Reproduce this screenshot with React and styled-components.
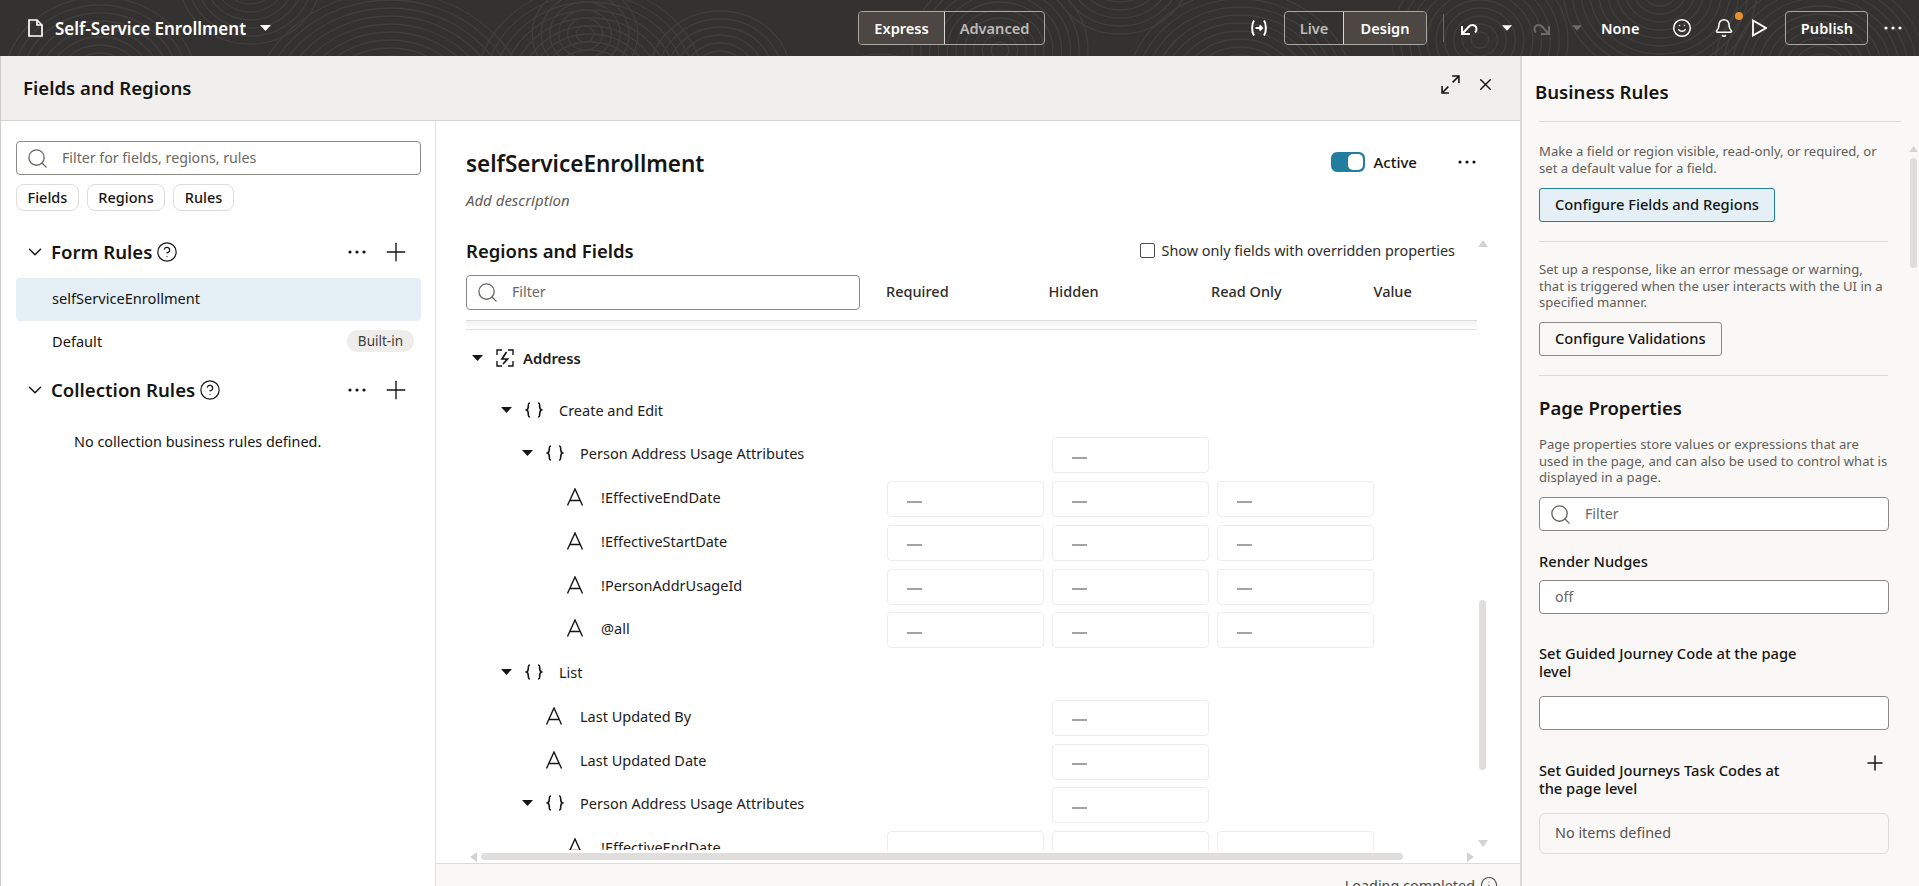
import React from "react";
import styled, { createGlobalStyle } from "styled-components";
import { ChevronDown, CircleHelp, Plus, X, Search, Bell, Smile, Info } from "lucide-react";

const Global = createGlobalStyle`
  * { box-sizing: border-box; }
  html, body { margin: 0; height: 100%; background: #fff; overflow: hidden; }
  body { font-family: "Noto Sans", "Open Sans", Arial, sans-serif; color: #161513; font-size: 14px; }
`;

const Page = styled.div`display:flex;flex-direction:column;height:886px;width:1919px;overflow:hidden;`;

/* ---------- top bar ---------- */
const TopBar = styled.header`
  position: relative; height: 56px; flex: none; background: #333231; color: #fff;
  display: flex; align-items: center; overflow: hidden;
`;
const Texture = styled.svg`position:absolute;inset:0;width:100%;height:100%;`;
const BarLayer = styled.div`position:relative;display:flex;align-items:center;width:100%;height:100%;padding-left:28px;`;
const PageTitle = styled.span`font-size:17px;font-weight:600;margin-left:12px;white-space:nowrap;`;
const Tabs = styled.div`display:flex;height:34px;border:1px solid #a9a7a4;border-radius:4px;overflow:hidden;margin-left:${p => p.$ml}px;`;
const Tab = styled.div`
  width:${p => p.$w}px;display:flex;align-items:center;justify-content:center;font-size:14.6px;font-weight:600;padding-bottom:1px;
  color:${p => (p.$on ? "#fff" : "#bdbbb8")};background:${p => (p.$on ? "#4d4743" : "transparent")};
  & + & { border-left:1px solid #d8d6d3; }
`;
const VSep = styled.div`width:1px;height:28px;background:#6c6a68;margin:0 16px;`;
const BarText = styled.span`font-size:14.6px;font-weight:600;margin-left:${p => p.$ml}px;`;
const BarIcon = styled.span`display:flex;position:relative;margin-left:${p => p.$ml || 0}px;color:${p => p.$c || "#fff"};`;
const Dot = styled.span`position:absolute;width:8px;height:8px;border-radius:50%;background:#e8912f;top:-6px;right:-9px;`;
const PublishBtn = styled.div`
  height:34px;width:83px;border:1px solid #a9a7a4;border-radius:4px;margin-left:18px;display:flex;align-items:center;justify-content:center;
  font-size:14.6px;font-weight:600;padding-bottom:1px;
`;

/* ---------- layout ---------- */
const Body = styled.div`flex:1;display:flex;min-height:0;`;
const Main = styled.main`flex:1;display:flex;flex-direction:column;min-width:0;border-left:1px solid #cfcdca;`;
const PanelHead = styled.div`
  height:65px;flex:none;background:#f1efed;border-bottom:1px solid #d6d4d1;display:flex;align-items:center;
  padding:0 25px 2px 22px;
`;
const PanelTitle = styled.h2`margin:0;font-size:18.6px;font-weight:600;flex:1;`;
const PanelTools = styled.div`display:flex;align-items:center;margin-bottom:5px;`;
const Columns = styled.div`flex:1;display:flex;min-height:0;`;

/* ---------- left column ---------- */
const Left = styled.aside`width:435px;flex:none;padding:20px 14px 0 15px;border-right:1px solid #e3e1df;`;
const SearchBox = styled.div`
  height:${p => p.$h || 34}px;border:1px solid #8c8a87;border-radius:4px;background:#fff;display:flex;align-items:center;
  padding:0 0 2px 9px;color:#6b6864;font-size:14.2px;gap:13px;width:${p => (p.$w ? p.$w + "px" : "auto")};flex:none;
  margin-top:${p => p.$mt || 0}px;
  & > svg { margin-top:2px; }
`;
const Chips = styled.div`display:flex;gap:8px;margin-top:9px;`;
const Chip = styled.div`height:27px;padding:0 10.5px 1px;border:1px solid #dedcda;border-radius:8px;display:flex;align-items:center;font-size:14.5px;font-weight:500;`;
const SectionHead = styled.div`height:32px;display:flex;align-items:center;padding:0 10px 0 8px;margin-top:${p => p.$mt}px;`;
const SectionName = styled.span`font-size:18.6px;font-weight:600;margin:0 4px 2px 5px;white-space:nowrap;`;
const Spacer = styled.div`flex:1;`;
const RuleRow = styled.div`
  height:43px;display:flex;align-items:center;justify-content:space-between;padding:0 7px 3px 36px;font-size:14.6px;border-radius:4px;
  background:${p => (p.$on ? "#e4f0f6" : "transparent")};margin-top:${p => p.$mt || 0}px;
`;
const Pill = styled.span`height:22px;padding:0 11px;border-radius:11px;background:#efedeb;display:flex;align-items:center;font-size:13.5px;color:#3f3d3a;`;
const EmptyNote = styled.p`margin:26px 0 0 58px;font-size:14.4px;line-height:20px;`;

/* ---------- center ---------- */
const Center = styled.section`position:relative;flex:1;display:flex;flex-direction:column;min-width:0;padding-top:26px;`;
const Inset = styled.div`padding:0 44px 0 30px;`;
const TitleRow = styled(Inset)`display:flex;align-items:center;height:32px;`;
const RuleTitle = styled.h1`margin:0;font-size:22.5px;font-weight:600;flex:1;`;
const Switch = styled.div`width:34px;height:20px;border-radius:6px;background:#227e9e;border:2px solid #227e9e;display:flex;justify-content:flex-end;margin-bottom:2px;`;
const Knob = styled.div`width:15px;height:16px;background:#fff;border-radius:5px;`;
const ActiveText = styled.span`font-size:15px;font-weight:500;margin:0 41px 3px 8px;`;
const DotsWrap = styled.span`display:flex;margin-bottom:2px;`;
const Desc = styled(Inset)`margin-top:11px;height:20px;line-height:20px;font-style:italic;color:#5f5c58;font-size:15px;`;
const RegionHead = styled(Inset)`display:flex;align-items:center;height:24px;margin-top:28px;padding-right:65px;`;
const SubTitle = styled.h3`margin:0;font-size:18.5px;font-weight:600;flex:1;`;
const Box = styled.span`width:15px;height:15px;border:1px solid #4f4d4a;border-radius:2px;margin-right:7px;margin-top:1px;`;
const CheckText = styled.span`font-size:14.4px;color:#2e2c2a;`;
const FilterRow = styled(Inset)`display:flex;align-items:center;margin-top:13px;height:35px;`;
const HeadCols = styled.div`display:flex;margin-left:26px;padding-bottom:4px;`;
const HeadCol = styled.div`width:162.5px;font-size:14.5px;font-weight:500;color:#2e2c2a;`;
const Fade = styled.div`
  margin:10px 43px 0 30px;height:10px;flex:none;border-top:1px solid #dedcda;border-bottom:1px solid #e4e2e0;
  background:linear-gradient(#f3f2f1,#fff);
`;
const Tree = styled.div`flex:1;min-height:0;overflow:hidden;margin:0 43px 13px 30px;`;
const Row = styled.div`display:flex;align-items:center;height:${p => p.$h || 43.75}px;flex:none;`;
const NameCell = styled.div`width:421px;flex:none;display:flex;align-items:center;padding-left:${p => p.$pl}px;padding-bottom:4px;`;
const Label = styled.span`font-size:${p => (p.$strong ? 14.8 : 14.5)}px;font-weight:${p => (p.$strong ? 600 : 400)};margin-left:${p => p.$ml}px;white-space:nowrap;color:#1e1c1a;`;
const Cells = styled.div`display:grid;grid-template-columns:repeat(3,157px);column-gap:8px;`;
const Cell = styled.div`
  grid-column:${p => p.$col};height:36px;border:1px solid #efedeb;border-radius:4px;display:flex;align-items:center;padding:5px 0 0 19px;
`;
const Dash = styled.span`width:15px;height:2px;background:#a5a3a0;`;
const CaretGap = styled.span`width:13px;flex:none;`;
const Footer = styled.div`
  height:23px;flex:none;background:#f9f8f6;border-top:1px solid #dedcda;display:flex;justify-content:flex-end;align-items:flex-start;
  padding:12px 22px 0 0;gap:5px;font-size:14.4px;color:#4c4a47;white-space:nowrap;overflow:hidden;
`;
const Track = styled.div`position:absolute;background:#dfdedc;border-radius:4px;left:${p => p.$l}px;top:${p => p.$t}px;width:${p => p.$w}px;height:${p => p.$h}px;`;
const Arrow = styled.svg`position:absolute;left:${p => p.$l}px;top:${p => p.$t}px;fill:#d4d3d1;`;

/* ---------- right panel ---------- */
const Right = styled.aside`
  position:relative;width:399px;flex:none;background:#f9f8f6;border-left:2px solid #dbd9d7;padding:24px 18px 0 17px;overflow:hidden;
`;
const RightTitle = styled.h2`margin:0 0 0 -4px;font-size:18.6px;line-height:24px;font-weight:600;`;
const Line = styled.div`height:1px;background:#dcdad8;margin:${p => p.$m}px ${p => (p.$wide ? 0 : 13)}px 0 0;`;
const Help = styled.p`margin:${p => p.$mt}px 0 0;font-size:13.1px;line-height:${p => p.$lh || 16.5}px;color:#615e5a;width:350px;`;
const OutlineBtn = styled.div`
  display:inline-flex;align-items:center;height:34px;padding:0 15px 3px;margin-top:11.5px;border-radius:3px;font-size:14.7px;font-weight:500;
  background:${p => (p.$on ? "#e4f0f6" : "transparent")};border:1px solid ${p => (p.$on ? "#227e9e" : "#8c8a87")};
`;
const Block = styled.div`width:350px;`;
const BigTitle = styled.h2`margin:19px 0 0;font-size:18.5px;line-height:26px;font-weight:600;`;
const FieldLabel = styled.div`font-size:14.7px;line-height:18px;font-weight:500;margin-top:${p => p.$mt}px;max-width:${p => p.$mw || 349}px;`;
const Input = styled.div`
  height:34px;border:1px solid #8c8a87;border-radius:4px;background:#fff;display:flex;align-items:center;padding:0 0 2px 15px;
  margin-top:${p => p.$mt}px;color:#6b6864;font-size:14.2px;
`;
const LabelRow = styled.div`display:flex;justify-content:space-between;align-items:flex-start;`;
const NoItems = styled.div`height:41px;margin-top:16px;border:1px solid #dedcda;border-radius:6px;display:flex;align-items:center;padding:0 0 2px 15px;font-size:14.4px;color:#55524f;`;

/* ---------- drawings ---------- */
const rings = [
  [100, 85, 90], [390, 120, 130], [590, 90, 110], [585, 34, 50], [720, 75, 70], [1000, 50, 80], [1240, 95, 110],
  [1480, 40, 80], [1660, -10, 95], [1820, 70, 100], [880, 110, 60], [250, -20, 70], [1120, -30, 70],
];
const TopTexture = () => (
  <Texture aria-hidden="true">
    {rings.map(([cx, cy, r], i) => (
      <g key={i} fill="none" stroke="#403f3d" strokeWidth="1.3">
        {Array.from({ length: Math.floor(r / 8) }, (_, k) => (
          <ellipse key={k} cx={cx} cy={cy} rx={(k + 1) * 8 * 1.1} ry={(k + 1) * 8} />
        ))}
      </g>
    ))}
  </Texture>
);
const Caret = ({ c = "#161513", w = 11 }) => (
  <svg width={w} height="6" viewBox="0 0 11 6" style={{ flex: "none" }}><path d="M0 0h11L5.500 6z" fill={c} /></svg>
);
const Dots = ({ c = "#161513" }) => (
  <svg width="18" height="4" viewBox="0 0 18 4" style={{ flex: "none" }}>
    <circle cx="2" cy="2" r="1.6" fill={c} /><circle cx="9" cy="2" r="1.6" fill={c} /><circle cx="16" cy="2" r="1.6" fill={c} />
  </svg>
);
const DocIcon = () => (
  <svg width="15" height="18" viewBox="0 0 15 18" fill="none" stroke="#fff" strokeWidth="1.7"><path d="M1 1h8l5 5v11H1z" /><path d="M9 1v5h5" /></svg>
);
const BracketArrow = () => (
  <svg width="18" height="18" viewBox="0 0 18 18" fill="none" stroke="#fff" strokeWidth="2">
    <path d="M4 1.500C1.500 5 1.500 13 4 16.500M14 1.500c2.500 3.500 2.500 11.500 0 15" /><path d="M5.500 9h6.500M9.500 6.500 12 9l-2.500 2.500" />
  </svg>
);
const Undo = ({ c = "#fff", flip }) => (
  <svg width="18" height="16" viewBox="0 0 18 16" fill="none" stroke={c} strokeWidth="2" style={flip ? { transform: "scaleX(-1)" } : undefined}>
    <path d="M2 6v8h8" /><path d="M2.500 13.500 9 6.500c2.500-2.600 7-1.500 7.500 2 .2 1.500-.3 2.800-1.500 4" />
  </svg>
);
const PlayIcon = () => (
  <svg width="15" height="18" viewBox="0 0 15 18" fill="none" stroke="#fff" strokeWidth="1.8"><path d="M1 1.500v15L14 9z" /></svg>
);
const ExpandIcon = () => (
  <svg width="19" height="19" viewBox="0 0 18 18" fill="none" stroke="#161513" strokeWidth="1.5">
    <path d="M10.500 1h6.500v6.500M17 1l-6 6M7.500 17H1v-6.500M1 17l6-6" />
  </svg>
);
const AddressIcon = () => (
  <svg width="18" height="18" viewBox="0 0 18 18" fill="none" stroke="#161513" strokeWidth="1.4">
    <path d="M1 6V1h5M12 1h5v5M17 12v5h-5M6 17H1v-5" />
    <path d="M10.500 3 6 10h5.500L7 15" strokeWidth="1.7" />
  </svg>
);
const Braces = () => (
  <svg width="18" height="16" viewBox="0 0 17 16" fill="none" stroke="#161513" strokeWidth="1.6" style={{ flex: "none" }}>
    <path d="M4.500 1C2.800 1 2.800 2 2.800 4c0 2.500-.3 3.500-1.800 4 1.500.5 1.800 1.500 1.800 4 0 2 0 3 1.700 3" />
    <path d="M12.500 1c1.700 0 1.700 1 1.700 3 0 2.500.3 3.500 1.800 4-1.500.5-1.800 1.500-1.800 4 0 2 0 3-1.700 3" />
  </svg>
);
const AIcon = () => (
  <svg width="18" height="18" viewBox="0 0 17 18" fill="none" stroke="#161513" strokeWidth="1.4" style={{ flex: "none" }}>
    <path d="M1 17.500 8.500 1l7.500 16.500M3.500 12.500h10" />
  </svg>
);

const rows = [
  { kind: "region", pl: 6, name: "Address", h: 59.75 },
  { kind: "brace", pl: 35, name: "Create and Edit" },
  { kind: "brace", pl: 56, name: "Person Address Usage Attributes", cells: [2] },
  { kind: "a", pl: 100, name: "!EffectiveEndDate", cells: [1, 2, 3] },
  { kind: "a", pl: 100, name: "!EffectiveStartDate", cells: [1, 2, 3] },
  { kind: "a", pl: 100, name: "!PersonAddrUsageId", cells: [1, 2, 3] },
  { kind: "a", pl: 100, name: "@all", cells: [1, 2, 3] },
  { kind: "brace", pl: 35, name: "List" },
  { kind: "a", pl: 79, name: "Last Updated By", cells: [2] },
  { kind: "a", pl: 79, name: "Last Updated Date", cells: [2] },
  { kind: "brace", pl: 56, name: "Person Address Usage Attributes", cells: [2] },
  { kind: "a", pl: 100, name: "!EffectiveEndDate", cells: [1, 2, 3] },
];

const TreeRow = ({ r }) => (
  <Row $h={r.h}>
    <NameCell $pl={r.pl}>
      {r.kind === "region" && (<><Caret /><CaretGap /><AddressIcon /><Label $strong $ml={9}>{r.name}</Label></>)}
      {r.kind === "brace" && (<><Caret /><CaretGap /><Braces /><Label $ml={16}>{r.name}</Label></>)}
      {r.kind === "a" && (<><AIcon /><Label $ml={17}>{r.name}</Label></>)}
    </NameCell>
    {r.cells && (
      <Cells>
        {r.cells.map(c => <Cell key={c} $col={c}><Dash /></Cell>)}
      </Cells>
    )}
  </Row>
);

const SectionRow = ({ mt, name }) => (
  <SectionHead $mt={mt}>
    <ChevronDown size={22} strokeWidth={1.6} />
    <SectionName>{name}</SectionName>
    <CircleHelp size={22} strokeWidth={1.3} />
    <Spacer />
    <Dots />
    <BarIcon $ml={15} $c="#161513"><Plus size={30} strokeWidth={1.1} /></BarIcon>
  </SectionHead>
);

export default function App() {
  return (
    <Page>
      <Global />
      <TopBar>
        <TopTexture />
        <BarLayer>
          <DocIcon />
          <PageTitle>Self-Service Enrollment</PageTitle>
          <BarIcon $ml={14}><Caret c="#fff" /></BarIcon>
          <Tabs $ml={587}>
            <Tab $on $w={85}>Express</Tab>
            <Tab $w={100}>Advanced</Tab>
          </Tabs>
          <BarIcon $ml={205}><BracketArrow /></BarIcon>
          <Tabs $ml={16}>
            <Tab $w={58}>Live</Tab>
            <Tab $on $w={83}>Design</Tab>
          </Tabs>
          <VSep />
          <Undo />
          <BarIcon $ml={24}><Caret c="#fff" w={10} /></BarIcon>
          <BarIcon $ml={21}><Undo c="#6d6b69" flip /></BarIcon>
          <BarIcon $ml={21}><Caret c="#6d6b69" w={10} /></BarIcon>
          <BarText $ml={19}>None</BarText>
          <BarIcon $ml={33}><Smile size={20} strokeWidth={1.8} /></BarIcon>
          <BarIcon $ml={22}><Bell size={20} strokeWidth={1.8} /><Dot /></BarIcon>
          <BarIcon $ml={18}><PlayIcon /></BarIcon>
          <PublishBtn>Publish</PublishBtn>
          <BarIcon $ml={16}><Dots c="#fff" /></BarIcon>
        </BarLayer>
      </TopBar>
      <Body>
        <Main>
          <PanelHead>
            <PanelTitle>Fields and Regions</PanelTitle>
            <PanelTools>
              <ExpandIcon />
              <BarIcon $ml={16} $c="#161513"><X size={19} strokeWidth={1.7} /></BarIcon>
            </PanelTools>
          </PanelHead>
          <Columns>
            <Left>
              <SearchBox><Search size={23} strokeWidth={1.4} />Filter for fields, regions, rules</SearchBox>
              <Chips><Chip>Fields</Chip><Chip>Regions</Chip><Chip>Rules</Chip></Chips>
              <SectionRow mt={25} name="Form Rules" />
              <RuleRow $on $mt={10}>selfServiceEnrollment</RuleRow>
              <RuleRow>Default<Pill>Built-in</Pill></RuleRow>
              <SectionRow mt={10} name="Collection Rules" />
              <EmptyNote>No collection business rules defined.</EmptyNote>
            </Left>
            <Center>
              <TitleRow>
                <RuleTitle>selfServiceEnrollment</RuleTitle>
                <Switch><Knob /></Switch>
                <ActiveText>Active</ActiveText>
                <DotsWrap><Dots /></DotsWrap>
              </TitleRow>
              <Desc>Add description</Desc>
              <RegionHead>
                <SubTitle>Regions and Fields</SubTitle>
                <Box />
                <CheckText>Show only fields with overridden properties</CheckText>
              </RegionHead>
              <FilterRow>
                <SearchBox $w={394} $h={35}><Search size={23} strokeWidth={1.4} />Filter</SearchBox>
                <HeadCols>
                  <HeadCol>Required</HeadCol><HeadCol>Hidden</HeadCol><HeadCol>Read Only</HeadCol><HeadCol>Value</HeadCol>
                </HeadCols>
              </FilterRow>
              <Fade />
              <Tree>
                {rows.map((r, i) => <TreeRow key={i} r={r} />)}
              </Tree>
              <Footer>Loading completed <Info size={18} strokeWidth={1.4} /></Footer>
              <Track $l={1043} $t={479} $w={7} $h={170} />
              <Track $l={45} $t={732} $w={922} $h={7} />
              <Arrow $l={1042} $t={119} width="10" height="7" viewBox="0 0 10 7"><path d="M5 0l5 7H0z" /></Arrow>
              <Arrow $l={1042} $t={719} width="10" height="7" viewBox="0 0 10 7"><path d="M5 7L0 0h10z" /></Arrow>
              <Arrow $l={34} $t={731} width="7" height="10" viewBox="0 0 7 10"><path d="M0 5l7-5v10z" /></Arrow>
              <Arrow $l={1031} $t={731} width="7" height="10" viewBox="0 0 7 10"><path d="M7 5L0 0v10z" /></Arrow>
            </Center>
          </Columns>
        </Main>
        <Right>
          <RightTitle>Business Rules</RightTitle>
          <Line $m={17} $wide />
          <Help $mt={20.5} $lh={17}>Make a field or region visible, read-only, or required, or set a default value for a field.</Help>
          <OutlineBtn $on>Configure Fields and Regions</OutlineBtn>
          <Line $m={19} />
          <Help $mt={19}>Set up a response, like an error message or warning, that is triggered when the user interacts with the UI in a specified manner.</Help>
          <OutlineBtn>Configure Validations</OutlineBtn>
          <Line $m={19} />
          <Block>
            <BigTitle>Page Properties</BigTitle>
            <Help $mt={15}>Page properties store values or expressions that are used in the page, and can also be used to control what is displayed in a page.</Help>
            <SearchBox $mt={11.5}><Search size={23} strokeWidth={1.4} />Filter</SearchBox>
            <FieldLabel $mt={21}>Render Nudges</FieldLabel>
            <Input $mt={10}>off</Input>
            <FieldLabel $mt={30} $mw={265}>Set Guided Journey Code at the page level</FieldLabel>
            <Input $mt={16} />
            <LabelRow>
              <FieldLabel $mt={31} $mw={265}>Set Guided Journeys Task Codes at the page level</FieldLabel>
              <BarIcon $c="#161513" style={{ marginTop: 21, marginRight: 2 }}><Plus size={24} strokeWidth={1.5} /></BarIcon>
            </LabelRow>
            <NoItems>No items defined</NoItems>
          </Block>
          <Track $l={388} $t={102} $w={7} $h={110} />
          <Arrow $l={387} $t={90} width="9" height="6" viewBox="0 0 10 7"><path d="M5 0l5 7H0z" /></Arrow>
        </Right>
      </Body>
    </Page>
  );
}
